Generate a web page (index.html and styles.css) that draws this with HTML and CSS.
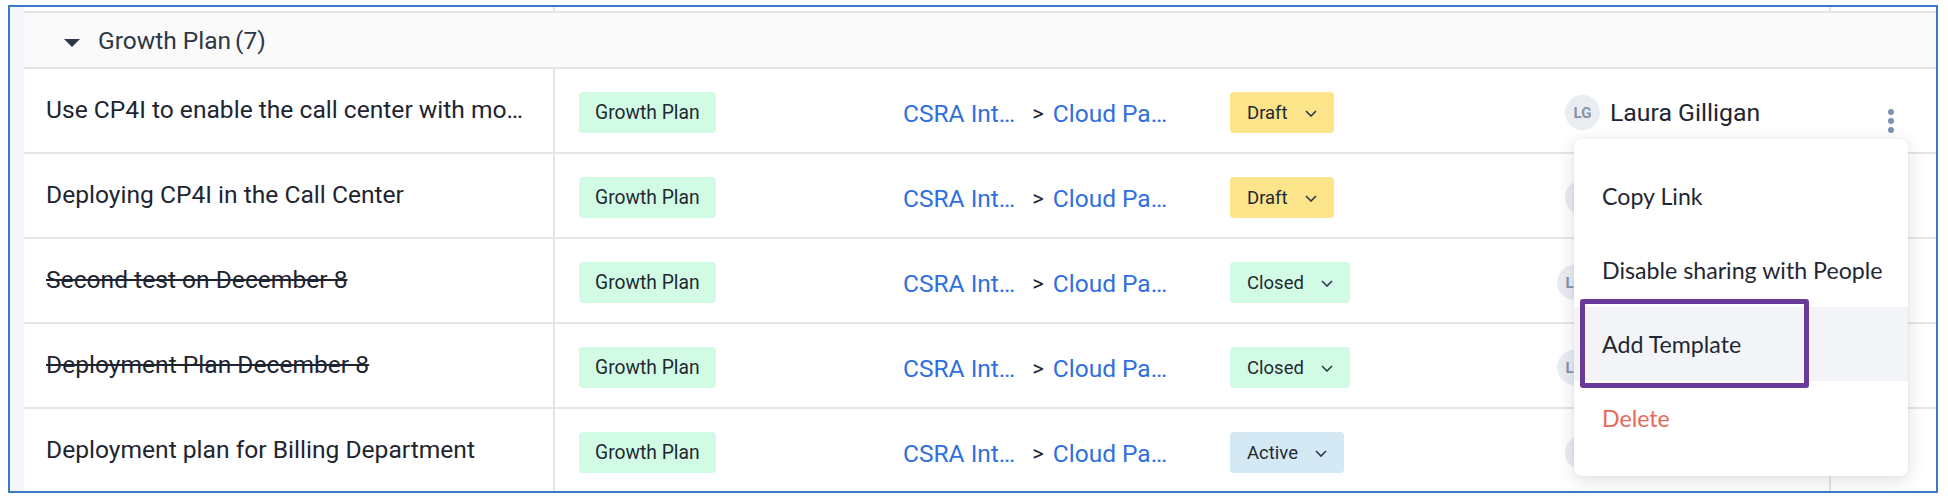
FILE: index.html
```html
<!DOCTYPE html>
<html lang="en">
<head>
<meta charset="utf-8">
<title>Growth Plan</title>
<link rel="stylesheet" href="styles.css">
</head>
<body>
<div class="frame">
  <div class="rail"></div>
  <div class="table">
    <div class="stub">
      <div class="stub-title"></div>
      <div class="stub-mid"></div>
      <div class="stub-kebab"></div>
    </div>
    <div class="group-head">
      <svg class="caret" width="16" height="8" viewBox="0 0 16 8"><polygon points="0,0 16,0 8,8" fill="#2d3748"/></svg>
      <span class="group-name">Growth Plan</span><span class="group-count">(7)</span>
    </div>

    <div class="row hovered">
      <div class="cell title">Use CP4I to enable the call center with mo…</div>
      <div class="cell type"><span class="tag tag-green">Growth Plan</span></div>
      <div class="cell path"><a class="link">CSRA Int…</a><span class="sep">&gt;</span><a class="link">Cloud Pa…</a></div>
      <div class="cell status"><span class="tag status-tag tag-yellow">Draft<svg class="chev" width="12" height="7" viewBox="0 0 12 7"><polyline points="1,1 6,6 11,1" fill="none" stroke="#2d3748" stroke-width="1.6"/></svg></span></div>
      <div class="cell owner"><span class="avatar">LG</span><span class="name">Laura Gilligan</span></div>
      <div class="cell kebab">
        <svg class="dots" width="6" height="24" viewBox="0 0 6 24"><circle cx="3" cy="3" r="3" fill="#7b93b5"/><circle cx="3" cy="12" r="3" fill="#7b93b5"/><circle cx="3" cy="21" r="3" fill="#7b93b5"/></svg>
      </div>
    </div>

    <div class="row">
      <div class="cell title">Deploying CP4I in the Call Center</div>
      <div class="cell type"><span class="tag tag-green">Growth Plan</span></div>
      <div class="cell path"><a class="link">CSRA Int…</a><span class="sep">&gt;</span><a class="link">Cloud Pa…</a></div>
      <div class="cell status"><span class="tag status-tag tag-yellow">Draft<svg class="chev" width="12" height="7" viewBox="0 0 12 7"><polyline points="1,1 6,6 11,1" fill="none" stroke="#2d3748" stroke-width="1.6"/></svg></span></div>
      <div class="cell owner"><span class="avatar">LG</span><span class="name">Laura Gilligan</span></div>
      <div class="cell kebab"></div>
    </div>

    <div class="row">
      <div class="cell title done">Second test on December 8</div>
      <div class="cell type"><span class="tag tag-green">Growth Plan</span></div>
      <div class="cell path"><a class="link">CSRA Int…</a><span class="sep">&gt;</span><a class="link">Cloud Pa…</a></div>
      <div class="cell status"><span class="tag status-tag tag-green">Closed<svg class="chev" width="12" height="7" viewBox="0 0 12 7"><polyline points="1,1 6,6 11,1" fill="none" stroke="#2d3748" stroke-width="1.6"/></svg></span></div>
      <div class="cell owner shifted"><span class="avatar">LG</span><span class="name">Laura Gilligan</span></div>
      <div class="cell kebab"></div>
    </div>

    <div class="row">
      <div class="cell title done">Deployment Plan December 8</div>
      <div class="cell type"><span class="tag tag-green">Growth Plan</span></div>
      <div class="cell path"><a class="link">CSRA Int…</a><span class="sep">&gt;</span><a class="link">Cloud Pa…</a></div>
      <div class="cell status"><span class="tag status-tag tag-green">Closed<svg class="chev" width="12" height="7" viewBox="0 0 12 7"><polyline points="1,1 6,6 11,1" fill="none" stroke="#2d3748" stroke-width="1.6"/></svg></span></div>
      <div class="cell owner shifted"><span class="avatar">LG</span><span class="name">Laura Gilligan</span></div>
      <div class="cell kebab"></div>
    </div>

    <div class="row">
      <div class="cell title">Deployment plan for Billing Department</div>
      <div class="cell type"><span class="tag tag-green">Growth Plan</span></div>
      <div class="cell path"><a class="link">CSRA Int…</a><span class="sep">&gt;</span><a class="link">Cloud Pa…</a></div>
      <div class="cell status"><span class="tag status-tag tag-blue">Active<svg class="chev" width="12" height="7" viewBox="0 0 12 7"><polyline points="1,1 6,6 11,1" fill="none" stroke="#2d3748" stroke-width="1.6"/></svg></span></div>
      <div class="cell owner"><span class="avatar">LG</span><span class="name">Laura Gilligan</span></div>
      <div class="cell kebab"></div>
    </div>
  </div>

  <div class="menu">
    <div class="menu-item">Copy Link</div>
    <div class="menu-item">Disable sharing with People</div>
    <div class="menu-item active">Add Template</div>
    <div class="menu-item danger">Delete</div>
  </div>
  <div class="annotation"></div>
</div>
</body>
</html>
```

FILE: styles.css
```css
* { box-sizing: border-box; }

html, body {
  margin: 0;
  padding: 0;
  background: #ffffff;
}

body {
  font-family: Roboto, "Liberation Sans", Arial, sans-serif;
  color: #1e2530;
}

.frame {
  position: relative;
  margin: 5px 0 0 8px;
  width: 1930px;
  height: 488px;
  border: 2px solid #3a78c8;
  display: flex;
  overflow: hidden;
  background: #ffffff;
}

.rail {
  width: 14px;
  flex: none;
  background: #f4f6f9;
}

.table {
  flex: 1;
  display: flex;
  flex-direction: column;
  min-width: 0;
  overflow: hidden;
}

.stub {
  height: 4px;
  flex: none;
  display: grid;
  grid-template-columns: 531px 1274px 1fr;
}
.stub-title { border-right: 2px solid #e4e4e4; }
.stub-kebab { border-left: 2px solid #e4e4e4; }

.group-head {
  height: 58px;
  flex: none;
  display: flex;
  align-items: center;
  padding-left: 40px;
  background: #fafafa;
  border-top: 2px solid #e4e4e4;
  border-bottom: 2px solid #e4e4e4;
  font-size: 24.5px;
  color: #2d3748;
}

.caret {
  margin-top: 5px;
  margin-right: 18px;
  flex: none;
}

.group-count {
  margin-left: 4px;
}

.row {
  height: 85px;
  flex: none;
  display: grid;
  grid-template-columns: 531px 348px 327px 335px 264px 1fr;
  border-bottom: 2px solid #e6e6e6;
}

.cell {
  display: flex;
  align-items: center;
  min-width: 0;
  white-space: nowrap;
}

.title {
  padding-left: 22px;
  padding-bottom: 2px;
  border-right: 2px solid #e4e4e4;
  font-size: 24.6px;
  color: #1e2530;
  overflow: hidden;
}

.title.done {
  text-decoration: line-through;
}

.type {
  padding-left: 24px;
  padding-top: 4px;
}

.tag {
  display: inline-flex;
  align-items: center;
  height: 41px;
  padding: 0 16px;
  border-radius: 4px;
  font-size: 19.3px;
  color: #1f2933;
}

.tag-green { background: #d2fbe6; }
.tag-yellow { background: #fbe48a; }
.tag-blue { background: #d4e9f4; }

.status-tag {
  padding: 0 17px;
  font-size: 18.5px;
}

.chev {
  margin-left: 17px;
  margin-top: 2px;
}

.path {
  padding-top: 6px;
  font-size: 24.5px;
}

.link {
  color: #2f6fe0;
  text-decoration: none;
}

.sep {
  color: #1e2530;
  font-size: 22px;
  margin: 0 9px 0 17px;
}

.status {
  padding-top: 4px;
}

.owner {
  padding-top: 4px;
}

.owner.shifted {
  margin-left: -8px;
}

.avatar {
  width: 35px;
  height: 35px;
  flex: none;
  border-radius: 50%;
  background: #e9edf2;
  color: #8594a8;
  font-size: 15px;
  font-weight: 700;
  display: inline-flex;
  align-items: center;
  justify-content: center;
}

.name {
  margin-left: 10px;
  font-size: 24.8px;
  color: #1e2530;
}

.kebab {
  border-left: 2px solid #e4e4e4;
  padding-left: 57px;
  align-items: flex-start;
}

.row.hovered .kebab {
  border-left-color: transparent;
}

.dots {
  margin-top: 40px;
}

.menu {
  position: absolute;
  left: 1564px;
  top: 132px;
  width: 334px;
  height: 337px;
  padding: 20px 0;
  background: #ffffff;
  border-radius: 8px;
  box-shadow: 0 4px 18px rgba(20, 30, 50, 0.14), 0 0 2px rgba(20, 30, 50, 0.08);
  font-family: Lato, "Open Sans", sans-serif;
  z-index: 2;
}

.menu-item {
  height: 74px;
  display: flex;
  align-items: center;
  padding-left: 28px;
  font-size: 23.2px;
  color: #1f2733;
  white-space: nowrap;
}

.menu-item.active {
  background: #f2f4f7;
}

.menu-item.danger {
  color: #e8675a;
}

.annotation {
  position: absolute;
  left: 1570px;
  top: 292px;
  width: 229px;
  height: 89px;
  border: 5px solid #6a3a9a;
  border-radius: 3px;
  z-index: 3;
}
```
